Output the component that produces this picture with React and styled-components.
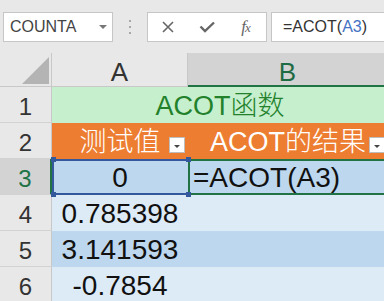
import React from 'react';
import styled, { createGlobalStyle } from 'styled-components';

const GlobalStyle = createGlobalStyle`
  html, body {
    margin: 0;
    padding: 0;
  }
  body {
    background: #e8e8e8;
    font-family: "Liberation Sans", Arial, "Noto Sans CJK SC", sans-serif;
    overflow: hidden;
  }
`;

const Window = styled.div`
  width: 384px;
  height: 301px;
  overflow: hidden;
  background: #e8e8e8;
`;

/* formula bar */

const Toolbar = styled.div`
  height: 53px;
  box-sizing: border-box;
  display: flex;
  align-items: flex-start;
  padding: 12px 0 0 3px;
`;

const NameBox = styled.div`
  width: 110px;
  height: 30px;
  box-sizing: border-box;
  display: flex;
  align-items: center;
  padding: 0 5px 0 6px;
  background: #fff;
  border: 1px solid #c6c6c6;
  color: #444;
  font-size: 16px;
`;

const DropArrow = styled.span`
  margin-left: auto;
  width: 0;
  height: 0;
  border-left: 4px solid transparent;
  border-right: 4px solid transparent;
  border-top: 4px solid #777;
`;

const Splitter = styled.div`
  width: 34px;
  height: 30px;
  display: flex;
  flex-direction: column;
  align-items: center;
  justify-content: center;
  gap: 4px;
`;

const Dot = styled.span`
  width: 2px;
  height: 2px;
  background: #a8a8a8;
`;

const ButtonGroup = styled.div`
  width: 120px;
  height: 30px;
  box-sizing: border-box;
  display: flex;
  background: #fff;
  border: 1px solid #c6c6c6;
`;

const BarButton = styled.div`
  width: 39px;
  display: flex;
  align-items: center;
  justify-content: center;
  color: #666;
`;

const Fx = styled.span`
  font-family: "Liberation Serif", "Times New Roman", serif;
  font-style: italic;
  font-size: 17px;
  color: #666;
  letter-spacing: -1px;
  span {
    font-size: 13px;
  }
`;

const FormulaBox = styled.div`
  flex: 1;
  height: 30px;
  margin-left: 4px;
  box-sizing: border-box;
  display: flex;
  align-items: center;
  padding-left: 11px;
  background: #fff;
  border: 1px solid #c6c6c6;
  border-right: none;
  color: #333;
  font-size: 16px;
`;

const RefText = styled.span`
  color: #4472c4;
`;

/* sheet */

const Sheet = styled.div`
  display: grid;
  grid-template-columns: 52px 136px 200px;
  grid-template-rows: 34px repeat(6, 36px);
  width: 388px;
`;

const Corner = styled.div`
  box-sizing: border-box;
  display: flex;
  align-items: flex-end;
  justify-content: flex-end;
  padding: 0 2px 2px 0;
  background: #e8e8e8;
  border-right: 1px solid #c8c8c8;
  border-bottom: 1px solid #c8c8c8;
`;

const ColHeader = styled.div`
  box-sizing: border-box;
  display: flex;
  align-items: flex-end;
  justify-content: center;
  background: ${p => (p.$active ? '#d3d3d3' : '#e8e8e8')};
  color: ${p => (p.$active ? '#1f6b44' : '#333')};
  border-right: 1px solid #c8c8c8;
  border-bottom: ${p => (p.$active ? '2px solid #217346' : '1px solid #c8c8c8')};
  font-size: 26px;
  line-height: 26px;
  padding-bottom: ${p => (p.$active ? '0' : '1px')};
`;

const RowHeader = styled.div`
  box-sizing: border-box;
  display: flex;
  align-items: flex-end;
  justify-content: center;
  padding-bottom: 3px;
  background: ${p => (p.$active ? '#d3d3d3' : '#e8e8e8')};
  color: ${p => (p.$active ? '#217346' : '#333')};
  border-right: ${p => (p.$active ? '2px solid #217346' : '1px solid #c8c8c8')};
  border-bottom: 1px solid #d2d2d2;
  font-size: 24px;
  line-height: 24px;
`;

const TitleCell = styled.div`
  grid-column: span 2;
  display: flex;
  align-items: flex-end;
  justify-content: center;
  padding-bottom: 4px;
  box-sizing: border-box;
  background: #c6efce;
  color: #22812a;
  font-size: 27px;
  font-weight: 300;
  line-height: 26px;
`;

const HeadCell = styled.div`
  position: relative;
  display: flex;
  align-items: flex-end;
  justify-content: center;
  padding-bottom: 4px;
  box-sizing: border-box;
  background: #ed7d31;
  color: #fff;
  font-size: 27px;
  font-weight: 300;
  line-height: 26px;
`;

const FilterButton = styled.span`
  position: absolute;
  right: 3px;
  bottom: 6px;
  width: 16px;
  height: 16px;
  box-sizing: border-box;
  display: flex;
  align-items: center;
  justify-content: center;
  background: #fff;
  border: 1px solid #bdbdbd;
  &::after {
    content: '';
    margin-top: 3px;
    border-left: 3px solid transparent;
    border-right: 3px solid transparent;
    border-top: 3px solid #444;
  }
`;

const DataCell = styled.div`
  display: flex;
  align-items: flex-end;
  justify-content: ${p => p.$align || 'center'};
  padding-bottom: 4px;
  box-sizing: border-box;
  background: ${p => (p.$band === 'dark' ? '#bdd7ee' : '#ddebf7')};
  color: #111;
  font-size: 28px;
  line-height: 26px;
`;

const RefCell = styled(DataCell)`
  position: relative;
  z-index: 2;
  box-shadow: inset 2px 2px 0 #34589c, inset 0 -2px 0 #34589c;
`;

const Handle = styled.span`
  position: absolute;
  width: 5px;
  height: 5px;
  background: #34589c;
  ${p => (p.$top ? 'top: -2px;' : 'bottom: -2px;')}
  ${p => (p.$left ? 'left: -1px;' : 'right: -3px;')}
`;

const EditCell = styled(DataCell)`
  padding-left: 3px;
  border-left: 2px solid #217346;
  border-top: 2px solid #217346;
  border-bottom: 2px solid #217346;
  padding-bottom: 2px;
`;

const rows = [
  { n: 4, value: '0.785398', band: 'light' },
  { n: 5, value: '3.141593', band: 'dark' },
  { n: 6, value: '-0.7854', band: 'light' },
];

export default function App() {
  return (
    <Window>
      <GlobalStyle />
      <Toolbar>
        <NameBox>
          COUNTA
          <DropArrow />
        </NameBox>
        <Splitter>
          <Dot />
          <Dot />
          <Dot />
        </Splitter>
        <ButtonGroup>
          <BarButton>
            <svg width="12" height="12" viewBox="0 0 12 12">
              <path d="M1 1 L11 11 M11 1 L1 11" stroke="#666" strokeWidth="1.6" fill="none" />
            </svg>
          </BarButton>
          <BarButton>
            <svg width="16" height="12" viewBox="0 0 16 12">
              <path d="M1.5 5.5 L6 10 L15 1.5" stroke="#666" strokeWidth="2.4" fill="none" />
            </svg>
          </BarButton>
          <BarButton>
            <Fx>f<span>x</span></Fx>
          </BarButton>
        </ButtonGroup>
        <FormulaBox>
          =ACOT(<RefText>A3</RefText>)
        </FormulaBox>
      </Toolbar>

      <Sheet>
        <Corner>
          <svg width="27" height="27" viewBox="0 0 27 27">
            <polygon points="0,27 27,0 27,27" fill="#b4b4b4" />
          </svg>
        </Corner>
        <ColHeader>A</ColHeader>
        <ColHeader $active>B</ColHeader>

        <RowHeader>1</RowHeader>
        <TitleCell>ACOT函数</TitleCell>

        <RowHeader>2</RowHeader>
        <HeadCell>
          测试值
          <FilterButton />
        </HeadCell>
        <HeadCell>
          ACOT的结果
          <FilterButton />
        </HeadCell>

        <RowHeader $active>3</RowHeader>
        <RefCell $band="dark">
          0
          <Handle $top $left />
          <Handle $top />
          <Handle $left />
          <Handle />
        </RefCell>
        <EditCell $band="dark" $align="flex-start">=ACOT(A3)</EditCell>

        {rows.map(r => (
          <React.Fragment key={r.n}>
            <RowHeader>{r.n}</RowHeader>
            <DataCell $band={r.band}>{r.value}</DataCell>
            <DataCell $band={r.band} />
          </React.Fragment>
        ))}
      </Sheet>
    </Window>
  );
}
